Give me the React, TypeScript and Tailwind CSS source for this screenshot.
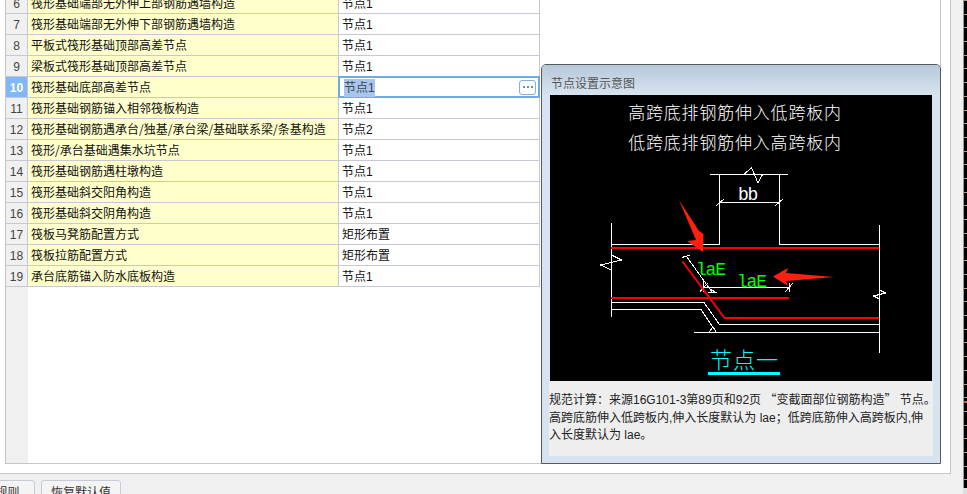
const rows = [
  { no: 6, name: "筏形基础端部无外伸上部钢筋遇墙构造", value: "节点1" },
  { no: 7, name: "筏形基础端部无外伸下部钢筋遇墙构造", value: "节点1" },
  { no: 8, name: "平板式筏形基础顶部高差节点", value: "节点1" },
  { no: 9, name: "梁板式筏形基础顶部高差节点", value: "节点1" },
  { no: 10, name: "筏形基础底部高差节点", value: "节点1" },
  { no: 11, name: "筏形基础钢筋锚入相邻筏板构造", value: "节点1" },
  { no: 12, name: "筏形基础钢筋遇承台/独基/承台梁/基础联系梁/条基构造", value: "节点2" },
  { no: 13, name: "筏形/承台基础遇集水坑节点", value: "节点1" },
  { no: 14, name: "筏形基础钢筋遇柱墩构造", value: "节点1" },
  { no: 15, name: "筏形基础斜交阳角构造", value: "节点1" },
  { no: 16, name: "筏形基础斜交阴角构造", value: "节点1" },
  { no: 17, name: "筏板马凳筋配置方式", value: "矩形布置" },
  { no: 18, name: "筏板拉筋配置方式", value: "矩形布置" },
  { no: 19, name: "承台底筋锚入防水底板构造", value: "节点1" },
];

const ACTIVE = 10;

function NodeDrawing() {
  return (
    <svg viewBox="550 95 382 286" className="block h-[286px] w-[382px] bg-black" shapeRendering="crispEdges">
      <g fontFamily="'Noto Sans CJK SC', sans-serif" fontSize="17" fill="#ffffff" textAnchor="middle" letterSpacing="0.8" fontWeight="300">
        <text x="735" y="119">高跨底排钢筋伸入低跨板内</text>
        <text x="735" y="149">低跨底排钢筋伸入高跨板内</text>
      </g>

      {/* concrete outline */}
      <g stroke="#ffffff" strokeWidth="1" fill="none">
        <path d="M710 174.5H788M719.5 174.5V244.5H611.5M779.5 174.5V244.5H879.5" />
        <path d="M744 174.5L751.5 167.5L758 183L762.5 174.5" />
        <path d="M719.5 202.5H779.5M716 206L724 199M775 206L783 199" />
        <path d="M611.5 223V317M879.5 225V353" />
        <path d="M611.5 255L621.5 260L600.5 265L611.5 270" />
        <path d="M879.5 290L885.5 293L873.5 296L879.5 299" />
        <path d="M611.5 302.5H704L719.5 324.5H879.5" />
        <path d="M611.5 309.5H701L716.5 332.5M693.5 332.5H879.5" />
        <path d="M709 332L713 327L716 331" />
        {/* dimension lines */}
        <path d="M686.5 256.5L712 292M682 257.5L690 255M708 292.5H717" />
        <path d="M703.5 287.5H789.5M703.5 280V292M789.5 283V292M700 291.5L708 283M785 292L793 283M710 289L717 293" />
      </g>

      {/* rebar */}
      <g stroke="#ff0000" fill="none">
        <path d="M611 248H879M611 298H789M724 318H879" strokeWidth="2" />
        <path d="M682.5 261.5L724.5 318" strokeWidth="2" shapeRendering="auto" />
      </g>

      {/* arrows */}
      <g fill="#ff2010" shapeRendering="auto">
        <polygon points="679,200 699,231 703.5,234 703,252 687,241 696,240" />
        <polygon points="773,276.5 788,268 786,273 834,277 786,281 788,286" />
      </g>

      <g fontFamily="'Liberation Mono', monospace" fontSize="18" letterSpacing="-1.2">
        <text x="738" y="200" fill="#ffffff">bb</text>
        <text x="696" y="275" fill="#00ff00">laE</text>
        <text x="737" y="287" fill="#00ff00">laE</text>
      </g>

      <text x="710" y="368" fontFamily="'Noto Sans CJK SC', sans-serif" fontSize="22" fill="#00ffff" letterSpacing="1" fontWeight="300">
        节点一
      </text>
      <rect x="708" y="372" width="72" height="3" fill="#00ffff" />
    </svg>
  );
}

export default function App() {
  return (
    <div className="relative flex h-[494px] w-[967px] flex-col overflow-hidden bg-[#f0f0f0] font-['Liberation_Sans','Noto_Sans_CJK_SC',sans-serif] text-[12px] text-[#222]">
      {/* settings table */}
      <div className="h-[474px] w-[951px] shrink-0 border-r border-b border-[#c6c6c6] bg-white pl-[5px]">
        <div className="flex h-[464px] w-[936px] flex-col overflow-hidden border-r border-b border-l border-[#c6c6c6]">
          <div className="-mt-[7px] flex flex-1 flex-col">
            {rows.map((row) => (
              <div key={row.no} className="flex h-[21px] w-[534px] shrink-0">
                <div
                  className={
                    row.no === ACTIVE
                      ? "flex w-[22px] items-center justify-center border-r border-b border-[#c8c8d4] bg-[#7fb8f6] pt-[2px] font-bold text-white"
                      : "flex w-[22px] items-center justify-center border-r border-b border-[#c8c8d4] bg-[#f0f0f0] pt-[2px] text-[#444]"
                  }
                >
                  {row.no}
                </div>
                <div className="flex w-[311px] items-center border-r border-b border-[#c8c8d4] bg-[#ffffcc] pl-[3px] font-['Noto_Sans_CJK_SC',sans-serif] whitespace-nowrap text-[#111]">
                  {row.name}
                </div>
                <div className="relative flex w-[201px] items-center border-r border-b border-[#c8c8d4] pt-[2px] pl-[3px] text-[#111]">
                  {row.no === ACTIVE ? (
                    <div className="absolute -inset-x-px -top-px -bottom-px flex items-center justify-between border-2 border-[#6dabeb] bg-white pt-[2px] pr-[2px] pl-[4px]">
                      <span className="bg-[#a6c5ef] text-[#444]">{row.value}</span>
                      <button className="-mt-[2px] flex h-[15px] w-[17px] items-center justify-center gap-[2px] rounded-[3px] border border-[#7fb0e6] bg-white">
                        <span className="h-[2px] w-[2px] bg-[#5b94d6]" />
                        <span className="h-[2px] w-[2px] bg-[#5b94d6]" />
                        <span className="h-[2px] w-[2px] bg-[#5b94d6]" />
                      </button>
                    </div>
                  ) : (
                    row.value
                  )}
                </div>
              </div>
            ))}
            <div className="w-[22px] flex-1 bg-[#f0f0f0]" />
          </div>
        </div>
      </div>

      {/* footer buttons, cut by the window */}
      <div className="flex shrink-0 gap-[6px] pt-[6px]">
        <button className="-ml-[44px] flex h-[26px] w-[79px] shrink-0 items-center justify-center rounded-[3px] border border-[#c5cbdc] bg-[#f4f4f4] text-[#333]">
          计算规则
        </button>
        <button className="flex h-[26px] w-[80px] shrink-0 items-center justify-center rounded-[3px] border border-[#c5cbdc] bg-[#f4f4f4] text-[#333]">
          恢复默认值
        </button>
      </div>

      {/* floating preview panel */}
      <div className="absolute top-[64px] left-[541px] flex h-[400px] w-[400px] flex-col rounded-t-[5px] border border-[#555a60] bg-[#d7e3f0] px-[7px] pb-[7px]">
        <div className="-mx-[7px] flex h-[30px] items-center rounded-t-[4px] bg-gradient-to-b from-[#b8c8da] to-[#d7e3f0] pt-[8px] pl-[9px] text-[#555]">
          节点设置示意图
        </div>
        <div className="pl-px">
          <NodeDrawing />
        </div>
        <div className="flex-1 bg-[#eeeeee] pt-[9px] leading-[17.5px] whitespace-nowrap text-[#222]">
          规范计算：来源16G101-3第89页和92页 <span className="font-['Noto_Sans_CJK_SC']">“变截面部位钢筋构造”</span> 节点。
          <br />
          高跨底筋伸入低跨板内,伸入长度默认为 lae；低跨底筋伸入高跨板内,伸
          <br />
          入长度默认为 lae。
        </div>
      </div>

      {/* neighbouring window edge */}
      <div className="absolute top-0 right-0 bottom-[6px] w-[4px] border-l border-[#999] bg-[repeating-linear-gradient(to_bottom,#a89c90_0px,#a89c90_1px,#000000_1px,#000000_13.7px)]" />
      <div className="absolute top-[401px] right-0 h-[2px] w-[3px] bg-[#e05050]" />
      <div className="absolute right-0 bottom-0 h-[6px] w-[4px] bg-[#dddddd]" />
    </div>
  );
}
